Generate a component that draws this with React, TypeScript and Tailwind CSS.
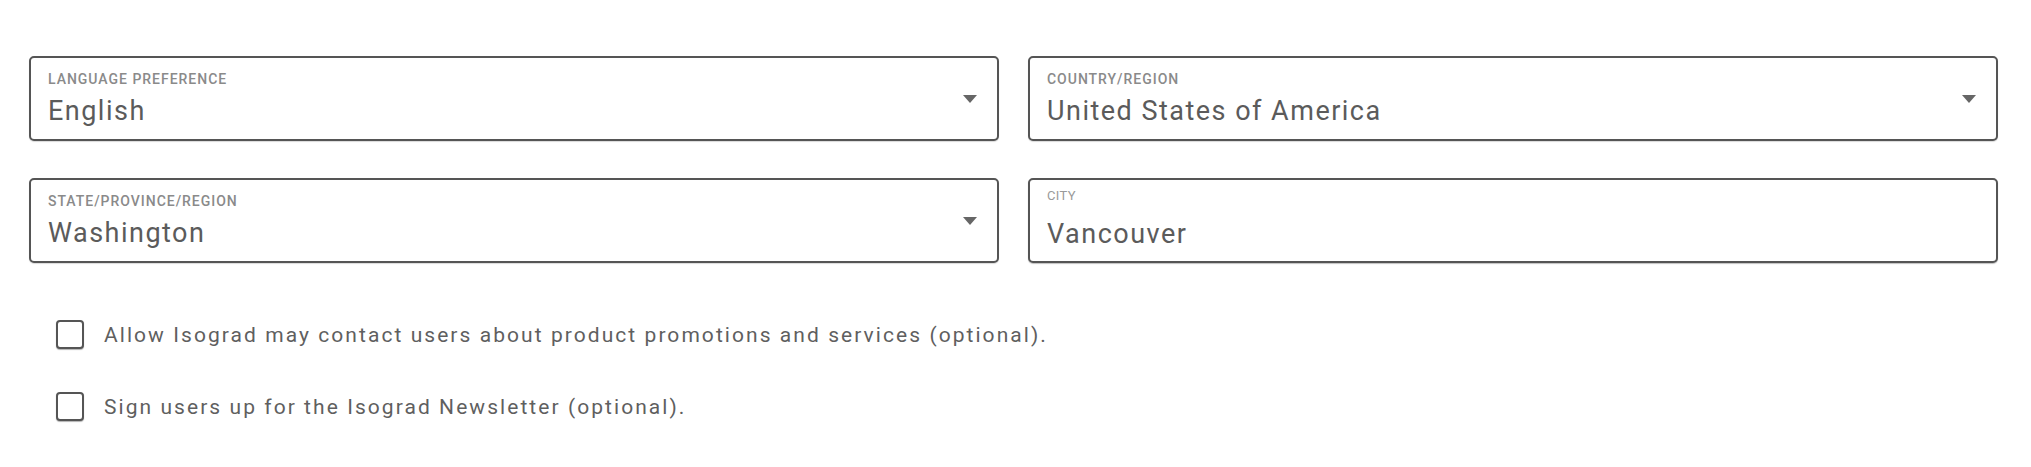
import React, { useState } from 'react';

interface SelectFieldProps {
  label: string;
  value: string;
}

const Caret: React.FC = () => (
  <svg width="14" height="8" viewBox="0 0 14 8" className="shrink-0">
    <path d="M0 0 H14 L7 8 Z" fill="#666666" />
  </svg>
);

const SelectField: React.FC<SelectFieldProps> = ({ label, value }) => (
  <div className="flex h-[85px] items-center rounded-[5px] border-2 border-[#555555] bg-white pl-[17px] pr-[20px] shadow-[0_1px_1px_rgba(0,0,0,0.15)]">
    <div className="flex min-w-0 flex-1 flex-col pt-[1px]">
      <span className="text-[14px] leading-[16px] font-medium uppercase tracking-[0.07em] text-[#8a8a8a]">
        {label}
      </span>
      <span className="mt-[8px] text-[27px] leading-[32px] tracking-[0.055em] text-[#5b5b5b]">{value}</span>
    </div>
    <Caret />
  </div>
);

const TextField: React.FC<SelectFieldProps> = ({ label, value }) => (
  <div className="flex h-[85px] flex-col rounded-[5px] border-2 border-[#555555] bg-white pl-[17px] pr-[20px] pt-[8px] shadow-[0_1px_1px_rgba(0,0,0,0.25)]">
    <span className="text-[13px] leading-[16px] uppercase tracking-[0.03em] text-[#9a9a9a]">{label}</span>
    <input
      type="text"
      defaultValue={value}
      className="mt-[14px] w-full bg-transparent text-[27px] leading-[32px] tracking-[0.055em] text-[#5b5b5b] outline-none"
      style={{ fontFamily: 'inherit' }}
    />
  </div>
);

const CheckRow: React.FC<{ text: string }> = ({ text }) => {
  const [checked, setChecked] = useState(false);
  return (
    <label className="flex cursor-pointer items-center gap-[20px]">
      <span
        onClick={() => setChecked(!checked)}
        className="flex h-[29px] w-[28px] shrink-0 items-center justify-center rounded-[4px] border-[2.5px] border-[#555555] bg-white shadow-[0_1px_1px_rgba(0,0,0,0.3)]"
      >
        {checked && <span className="text-[16px] leading-none text-[#5c5c5c]">✓</span>}
      </span>
      <span className="text-[21px] leading-[26px] tracking-[0.098em] text-[#5f5f5f]">{text}</span>
    </label>
  );
};

const App: React.FC = () => {
  return (
    <div
      className="min-h-[467px] w-full bg-white pl-[29px] pr-[33px] pt-[56px]"
      style={{ fontFamily: 'Roboto, "Liberation Sans", sans-serif' }}
    >
      <div className="grid grid-cols-2 gap-x-[29px] gap-y-[37px]">
        <SelectField label="Language Preference" value="English" />
        <SelectField label="Country/Region" value="United States of America" />
        <SelectField label="State/Province/Region" value="Washington" />
        <TextField label="City" value="Vancouver" />
      </div>
      <div className="mt-[57px] flex flex-col gap-[43px] pl-[27px]">
        <CheckRow text="Allow Isograd may contact users about product promotions and services (optional)." />
        <CheckRow text="Sign users up for the Isograd Newsletter (optional)." />
      </div>
    </div>
  );
};

export default App;
